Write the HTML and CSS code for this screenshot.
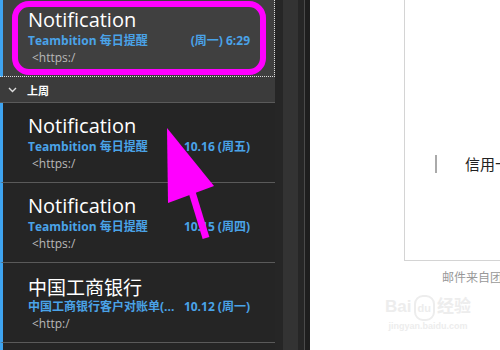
FILE: index.html
```html
<html lang="en">
<head>
  <meta charset="UTF-8">
  <title>Mail</title>
  <link rel="stylesheet" href="styles.css">
</head>
<body>

<div class="app">
  <!-- Message list -->
  <div class="mail-list">
    <div class="mail-item selected first">
      <div class="mail-title">Notification</div>
      <div class="mail-meta"><span>Teambition 每日提醒</span><span>(周一) 6:29</span></div>
      <div class="mail-preview">&lt;https:/</div>
    </div>

    <div class="group-header">
      <svg class="chevron" width="9" height="6" viewBox="0 0 9 6"><path d="M1 1 L4.5 4.5 L8 1" fill="none" stroke="#ddd" stroke-width="1.4"/></svg>
      <span>上周</span>
    </div>

    <div class="mail-item">
      <div class="mail-title">Notification</div>
      <div class="mail-meta"><span>Teambition 每日提醒</span><span>10.16 (周五)</span></div>
      <div class="mail-preview">&lt;https:/</div>
    </div>
    <div class="mail-item">
      <div class="mail-title">Notification</div>
      <div class="mail-meta"><span>Teambition 每日提醒</span><span>10.15 (周四)</span></div>
      <div class="mail-preview">&lt;https:/</div>
    </div>
    <div class="mail-item">
      <div class="mail-title cjk">中国工商银行</div>
      <div class="mail-meta"><span>中国工商银行客户对账单(...</span><span>10.12 (周一)</span></div>
      <div class="mail-preview">&lt;http:/</div>
    </div>
    <div class="mail-item"></div>
  </div>

  <!-- Scroll rail -->
  <div class="rail-gap"></div>
  <div class="rail-track"></div>
  <div class="rail-edge"></div>

  <!-- Reading pane -->
  <div class="reader">
    <div class="mail-frame">
      <div class="frame-line">
        <span class="broken-img"></span>
        <span class="frame-text">信用卡账单提醒</span>
      </div>
    </div>
    <div class="mail-footer">邮件来自团队协作工具</div>
    <div class="watermark">
      <div class="wm-logo">Bai<span class="wm-du">du</span>经验</div>
      <div class="wm-url">jingyan.baidu.com</div>
    </div>
  </div>
</div>

<!-- Annotation overlay -->
<svg class="annotation" width="500" height="350" viewBox="0 0 500 350">
  <rect x="15" y="4" width="248" height="68" rx="14" fill="none" stroke="#ff00ff" stroke-width="6"/>
  <polygon points="167,128 168,203 214,186" fill="#ff00ff"/>
  <line x1="192" y1="192" x2="206" y2="238" stroke="#ff00ff" stroke-width="7"/>
</svg>

</body>
</html>
```

FILE: styles.css
```css
body {
  margin: 0;
  width: 500px;
  height: 350px;
  overflow: hidden;
  font-family: "Open Sans", "Noto Sans CJK SC", sans-serif;
  background-color: #fff;
}

.app {
  display: flex;
  height: 350px;
}

/* Message list */
.mail-list {
  width: 275px;
  flex-shrink: 0;
  background-color: #252525;
  overflow: hidden;
}

.mail-item {
  height: 79px;
  border-bottom: 1px solid #5a5a5a;
  border-left: 3px solid #3fa4f0;
  padding-left: 25px;
  padding-right: 25px;
  box-sizing: content-box;
}

.mail-item.first {
  margin-top: -3px;
  height: 80px;
  border-bottom: none;
}

.mail-item.selected {
  background-color: #404040;
  border-right: 1px dotted #ddd;
  position: relative;
}

.mail-item.selected::after {
  content: "";
  position: absolute;
  left: -3px;
  right: -1px;
  bottom: 0;
  border-bottom: 1px dotted #ddd;
}

.mail-title {
  padding-top: 10px;
  height: 26px;
  font-size: 20px;
  line-height: 26px;
  color: #fff;
}

.mail-title.cjk {
  font-family: "Noto Sans CJK SC", sans-serif;
  font-size: 19px;
  padding-top: 11px;
  height: 25px;
}

.mail-meta {
  display: flex;
  justify-content: space-between;
  width: 222px;
  font-size: 12px;
  line-height: 16px;
  font-weight: bold;
  color: #4aa3e8;
}

.mail-preview {
  padding-left: 4px;
  padding-top: 1px;
  font-size: 12px;
  line-height: 16px;
  color: #b8b8b8;
}

.group-header {
  display: flex;
  align-items: center;
  height: 25px;
  background-color: #3b3b3b;
  border-bottom: 1px solid #5a5a5a;
  padding-left: 8px;
  font-size: 11px;
  font-weight: bold;
  color: #fff;
}

.group-header .chevron {
  margin-right: 10px;
}

/* Scroll rail */
.rail-gap {
  width: 8px;
  background-color: #262626;
}

.rail-track {
  width: 15px;
  background-color: #333;
}

.rail-edge {
  width: 6px;
  background-color: #262626;
  border-right: 1px solid #4a4a4a;
  margin-right: 5px;
  box-shadow: 6px 0 0 #1e1e1e;
}

/* Reading pane */
.reader {
  flex: 1;
  background-color: #fff;
  overflow: hidden;
}

.mail-frame {
  margin-left: 94px;
  height: 260px;
  border-left: 1px solid #d4d4d4;
  border-bottom: 1px solid #d4d4d4;
  box-sizing: content-box;
}

.frame-line {
  display: flex;
  align-items: center;
  padding-top: 153px;
  padding-left: 30px;
  white-space: nowrap;
}

.broken-img {
  width: 4px;
  height: 16px;
  border: 1px solid #aaa;
  margin-right: 28px;
}

.frame-text {
  font-family: "Noto Sans CJK SC", sans-serif;
  font-size: 15px;
  color: #222;
}

.mail-footer {
  padding-left: 132px;
  padding-top: 7px;
  font-family: "Noto Sans CJK SC", sans-serif;
  font-size: 12px;
  color: #999;
  white-space: nowrap;
}

.watermark {
  margin-left: 72px;
  margin-top: 10px;
  color: #ededed;
  width: 92px;
  text-align: center;
}

.wm-logo {
  font-family: "Liberation Sans", "Noto Sans CJK SC", sans-serif;
  font-size: 17px;
  font-weight: bold;
  line-height: 22px;
}

.wm-du {
  display: inline-block;
  font-size: 11px;
  border: 2px solid #ededed;
  border-radius: 9px;
  padding: 0 2px;
  margin: 0 2px;
}

.wm-url {
  font-family: "Liberation Sans", sans-serif;
  font-size: 9px;
  font-weight: bold;
}

/* Annotation overlay */
.annotation {
  position: absolute;
  top: 0;
  left: 0;
}
```
